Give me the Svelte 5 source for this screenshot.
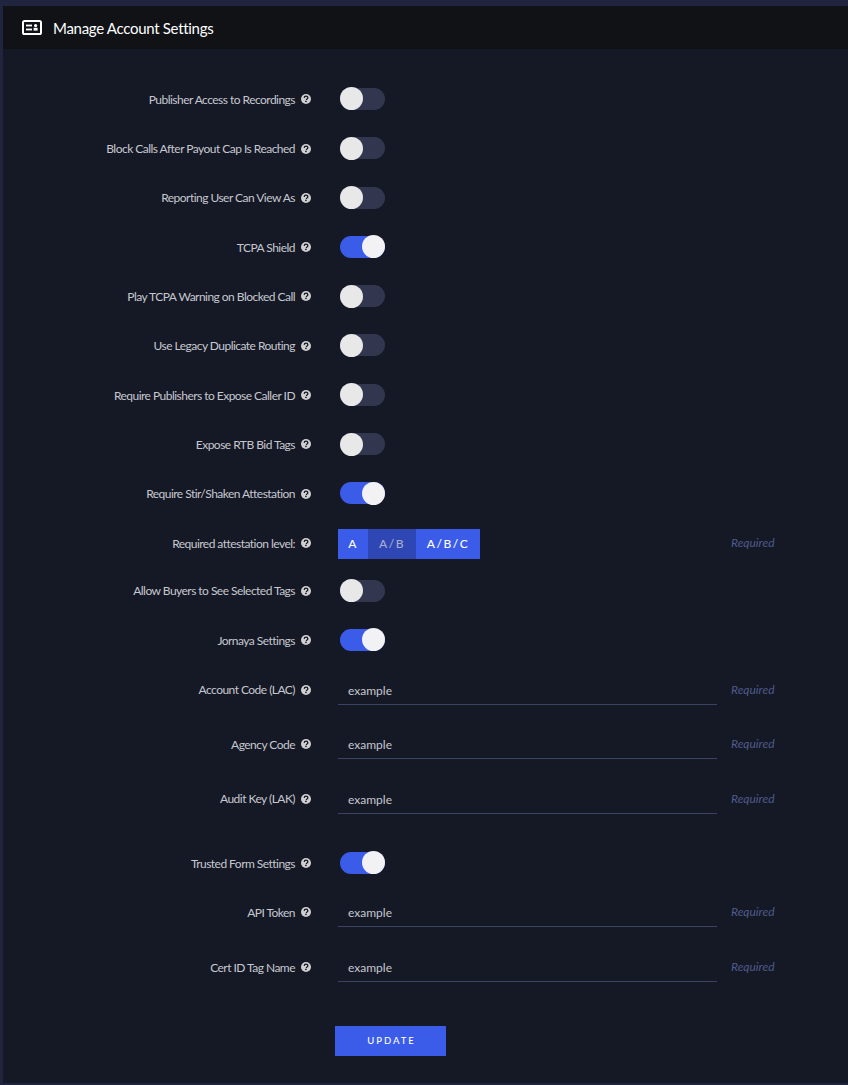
<script>
  const lead = [
    { label: "Publisher Access to Recordings", on: false },
    { label: "Block Calls After Payout Cap Is Reached", on: false },
    { label: "Reporting User Can View As", on: false },
    { label: "TCPA Shield", on: true },
    { label: "Play TCPA Warning on Blocked Call", on: false },
    { label: "Use Legacy Duplicate Routing", on: false },
    { label: "Require Publishers to Expose Caller ID", on: false },
    { label: "Expose RTB Bid Tags", on: false },
    { label: "Require Stir/Shaken Attestation", on: true },
  ];
  const jornaya = ["Account Code (LAC)", "Agency Code", "Audit Key (LAK)"];
  const trusted = ["API Token", "Cert ID Tag Name"];
  const levels = ["A", "A/B", "A/B/C"];
</script>

{#snippet help()}
  <svg class="help" viewBox="0 0 20 20" aria-hidden="true">
    <circle cx="10" cy="10" r="10" fill="#cfcfcf" />
    <path d="M6.4 7.8c.1-2.2 1.6-3.4 3.7-3.4 2.2 0 3.6 1.2 3.6 3 0 1.4-.9 2-1.8 2.6-.8.5-1.1.9-1.1 1.8" fill="none" stroke="#151825" stroke-width="2.6" />
    <rect x="8.4" y="13.4" width="3" height="2.8" fill="#151825" />
  </svg>
{/snippet}

{#snippet label(text)}
  <div class="label"><span>{text}</span>{@render help()}</div>
{/snippet}

{#snippet toggle(text, on)}
  <div class="row toggle-row">
    {@render label(text)}
    <div class="switch" class:on><div class="knob"></div></div>
  </div>
{/snippet}

{#snippet field(text)}
  <div class="row field-row">
    {@render label(text)}
    <input class="input" value="example" />
    <span class="required">Required</span>
  </div>
{/snippet}

<main class="panel">
  <header class="title">
    <svg class="card" viewBox="0 0 20 15" aria-hidden="true">
      <rect x="1" y="1" width="18" height="13" rx="1.6" fill="none" stroke="#fff" stroke-width="2" />
      <rect x="4" y="4.6" width="6" height="1.8" fill="#fff" />
      <rect x="4" y="8.6" width="6" height="1.8" fill="#fff" />
      <circle cx="13.6" cy="5.6" r="1.6" fill="#fff" />
      <rect x="11.6" y="7.8" width="4" height="2.8" fill="#fff" />
    </svg>
    <h1>Manage Account Settings</h1>
  </header>

  <form class="form" onsubmit={(e) => e.preventDefault()}>
    {#each lead as item}
      {@render toggle(item.label, item.on)}
    {/each}

    <div class="row level-row">
      {@render label("Required attestation level:")}
      <div class="segments">
        {#each levels as level, i}
          <button type="button" class="segment" class:active={i !== 1}>{level}</button>
        {/each}
      </div>
      <span class="required">Required</span>
    </div>

    {@render toggle("Allow Buyers to See Selected Tags", false)}
    {@render toggle("Jornaya Settings", true)}
    {#each jornaya as name}
      {@render field(name)}
    {/each}

    <div class="spaced">
      {@render toggle("Trusted Form Settings", true)}
    </div>
    {#each trusted as name}
      {@render field(name)}
    {/each}

    <div class="actions">
      <button type="submit" class="update">UPDATE</button>
    </div>
  </form>
</main>

<style>
  :global(body) {
    background: #20243f;
    font-family: Lato, "Open Sans", sans-serif;
  }

  .panel {
    margin: 6px 0 0 3px;
    height: 1077px;
    background: #151825;
    overflow: hidden;
  }

  .title {
    height: 43px;
    background: #101216;
    display: flex;
    align-items: center;
    padding-left: 19px;
    gap: 11px;
  }

  .card {
    width: 20px;
    height: 15px;
  }

  h1 {
    margin: 0;
    font-size: 15px;
    font-weight: 400;
    letter-spacing: -0.3px;
    color: #fff;
  }

  .form {
    padding-top: 25.35px;
  }

  .row {
    display: grid;
    grid-template-columns: 308px 379px auto;
    column-gap: 27px;
    align-items: center;
  }

  .toggle-row {
    height: 49.3px;
  }

  .level-row {
    height: 45px;
    margin-top: 3px;
  }

  .field-row {
    height: 54.7px;
    align-items: start;
    padding-top: 10px;
    box-sizing: border-box;
  }

  .spaced {
    margin-top: 9.5px;
  }

  .label {
    display: flex;
    align-items: center;
    justify-content: flex-end;
    gap: 6px;
    height: 30px;
    margin-top: 0.5px;
    font-size: 12px;
    letter-spacing: -0.53px;
    color: #c6c8cf;
  }

  .level-row .label {
    margin-top: -1px;
  }

  .field-row .label {
    margin-top: 0;
  }

  .help {
    width: 10px;
    height: 10px;
    flex: none;
  }

  .switch {
    width: 45px;
    height: 22px;
    margin-left: 2px;
    border-radius: 11px;
    background: #32374f;
    position: relative;
  }

  .switch.on {
    background: #3a5ce9;
  }

  .knob {
    position: absolute;
    top: -0.5px;
    left: 0;
    width: 23px;
    height: 23px;
    border-radius: 50%;
    background: #e8e8e8;
  }

  .on .knob {
    left: 22px;
    background: #f2f2f4;
  }

  .segments {
    display: flex;
    height: 30px;
  }

  .segment {
    border: 0;
    padding: 0;
    width: 30px;
    font: 500 12px Lato, sans-serif;
    letter-spacing: 1.5px;
    background: #2e47b5;
    color: #a6adcf;
  }

  .segment:nth-child(2) {
    width: 48px;
  }

  .segment:nth-child(3) {
    width: 64px;
  }

  .segment.active {
    background: #3a5ce9;
    color: #fff;
  }

  .input {
    height: 30px;
    box-sizing: border-box;
    padding: 2px 0 0 10px;
    border: 0;
    border-bottom: 1px solid #3c4266;
    background: transparent;
    font: 400 12px Lato, sans-serif;
    color: #c6c8cf;
    outline: none;
  }

  .required {
    margin-left: -13px;
    line-height: 30px;
    font-size: 12px;
    font-style: italic;
    color: #4f5b8c;
  }

  .level-row .required {
    margin-top: -1px;
  }

  .actions {
    margin-top: 29px;
    padding-left: 332px;
  }

  .update {
    width: 111px;
    height: 30px;
    padding: 0 0 0 2px;
    border: 0;
    background: #3a5ce9;
    color: #fff;
    font: 500 9.5px Lato, sans-serif;
    letter-spacing: 2px;
  }
</style>
